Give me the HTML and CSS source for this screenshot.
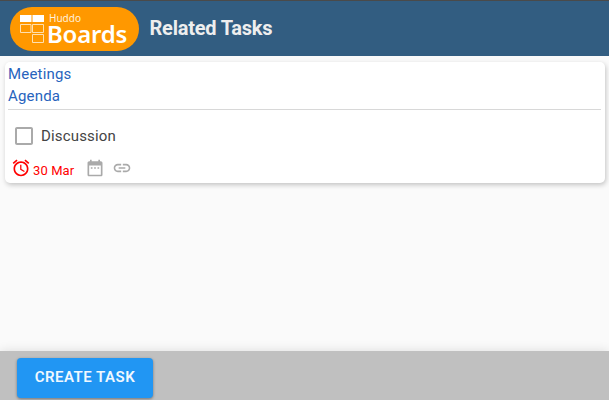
FILE: index.html
```html
<!DOCTYPE html>
<html lang="en">
<head>
<meta charset="utf-8">
<title>Related Tasks</title>
<link rel="stylesheet" href="styles.css">
</head>
<body>
<header class="header">
  <div class="logo">
    <svg class="logo-mark" width="25" height="29" viewBox="0 0 25 29" fill="none" stroke="#ffe0b0">
      <path d="M0 0h11.5v7H0zM12.5 0H24v7H12.5z" fill="#fff" stroke="none"/>
      <path d="M.5 9.5h10.500v8H.5zM12.500 9.500h11v8h-11zM12.500 19.500h11v8h-11z"/>
    </svg>
    <div class="logo-text">
      <span class="logo-small">Huddo</span>
      <span class="logo-large">Boards</span>
    </div>
  </div>
  <h1 class="title">Related Tasks</h1>
</header>
<main class="content">
  <section class="card">
    <div class="links">
      <a class="link">Meetings</a>
      <a class="link">Agenda</a>
    </div>
    <div class="task">
      <svg width="24" height="24" viewBox="0 0 24 24" fill="#aaa"><path d="M19 5v14H5V5h14m0-2H5c-1.100 0-2 .9-2 2v14c0 1.100.9 2 2 2h14c1.100 0 2-.9 2-2V5c0-1.100-.9-2-2-2z"/></svg>
      <span class="task-name">Discussion</span>
    </div>
    <div class="meta">
      <svg class="alarm" width="20" height="20" viewBox="0 0 24 24" fill="#f00"><path d="M22 5.720l-4.600-3.860-1.290 1.530 4.600 3.860L22 5.720zM7.880 3.390L6.600 1.860 2 5.710l1.290 1.530 4.590-3.850zM12.500 8H11v6l4.750 2.850.75-1.230-4-2.370V8zM12 4c-4.970 0-9 4.030-9 9s4.020 9 9 9c4.970 0 9-4.030 9-9s-4.030-9-9-9zm0 16c-3.870 0-7-3.130-7-7s3.130-7 7-7 7 3.130 7 7-3.130 7-7 7z"/></svg>
      <span class="date">30 Mar</span>
      <svg class="calendar" width="20" height="20" viewBox="0 0 24 24" fill="#aaa"><path d="M9 11H7v2h2v-2zm4 0h-2v2h2v-2zm4 0h-2v2h2v-2zm2-7h-1V2h-2v2H8V2H6v2H5c-1.110 0-1.990.9-1.990 2L3 20c0 1.100.89 2 2 2h14c1.100 0 2-.9 2-2V6c0-1.100-.9-2-2-2zm0 16H5V9h14v11z"/></svg>
      <svg class="chain" width="20" height="20" viewBox="0 0 24 24" fill="#aaa"><path d="M3.900 12c0-1.710 1.390-3.100 3.100-3.100h4V7H7c-2.760 0-5 2.240-5 5s2.240 5 5 5h4v-1.900H7c-1.710 0-3.100-1.390-3.100-3.100zM8 13h8v-2H8v2zm9-6h-4v1.900h4c1.710 0 3.100 1.390 3.100 3.100s-1.390 3.100-3.100 3.100h-4V17h4c2.760 0 5-2.240 5-5s-2.240-5-5-5z"/></svg>
    </div>
  </section>
</main>
<footer class="footer">
  <button class="create">CREATE TASK</button>
</footer>
</body>
</html>
```
FILE: styles.css
```css
* { box-sizing: border-box; }

body {
  margin: 0;
  height: 400px;
  display: flex;
  flex-direction: column;
  overflow: hidden;
  background: #fafafa;
  font-family: Roboto, "Liberation Sans", sans-serif;
}

.header {
  height: 56px;
  flex: none;
  display: flex;
  align-items: flex-start;
  padding: 6px 10px 0;
  border-top: 1px solid #4a4a4a;
  background: #325d81;
}

.logo {
  width: 129px;
  height: 44px;
  display: flex;
  padding: 8px 0 0 10px;
  border-radius: 22px;
  background: #ff9800;
}

.logo-mark { flex: none; }

.logo-text {
  display: flex;
  flex-direction: column;
  margin: -2px 0 0 2px;
  color: #fff;
  font-family: "Noto Sans", "Open Sans", sans-serif;
}

.logo-small {
  padding-left: 2px;
  font-size: 10px;
  line-height: 11px;
  letter-spacing: 0;
  color: #fff0dc;
}

.logo-large {
  font-size: 24px;
  font-weight: 600;
  line-height: 20px;
  letter-spacing: -0.200px;
}

.title {
  margin: 9px 0 0 10.500px;
  font-size: 20px;
  font-weight: 700;
  line-height: 24px;
  letter-spacing: -0.220px;
  color: #eee;
}

.content {
  flex: 1;
  padding: 6px 4px 0 5px;
}

.card {
  height: 121px;
  padding: 1px 4px 0 3px;
  border-radius: 5px;
  background: #fff;
  box-shadow: 1px 2px 5px rgba(0, 0, 0, 0.22);
}

.links {
  display: flex;
  flex-direction: column;
  height: 47px;
  border-bottom: 1px solid #d8d8d8;
}

.link {
  font-size: 15px;
  line-height: 22px;
  letter-spacing: 0.180px;
  color: #2763bd;
}

.task {
  display: flex;
  align-items: center;
  height: 24px;
  margin: 14px 0 0 4px;
}

.task-name {
  margin-left: 5px;
  font-size: 15px;
  letter-spacing: 0.160px;
  color: #444;
}

.meta {
  display: flex;
  align-items: center;
  height: 20px;
  margin: 10px 0 0 3px;
}

.date {
  width: 42px;
  margin: 5px 0 0 2px;
  font-size: 13px;
  line-height: 15px;
  letter-spacing: 0.100px;
  white-space: nowrap;
  color: #f00;
}

.calendar { margin-left: 10px; }
.chain { margin-left: 7px; }

.footer {
  height: 49px;
  flex: none;
  padding: 7px 17px 0;
  background: #c0c0c0;
  box-shadow: 0 0 10px rgba(0, 0, 0, 0.12);
}

.create {
  width: 136px;
  height: 40px;
  display: block;
  padding: 0 0 2px;
  border: 0;
  border-radius: 4px;
  background: #2196f3;
  box-shadow: 0 1px 3px rgba(0, 0, 0, 0.4);
  color: #f0f8ff;
  font-family: Roboto, sans-serif;
  font-size: 15px;
  font-weight: 600;
  letter-spacing: 0.500px;
}
```
